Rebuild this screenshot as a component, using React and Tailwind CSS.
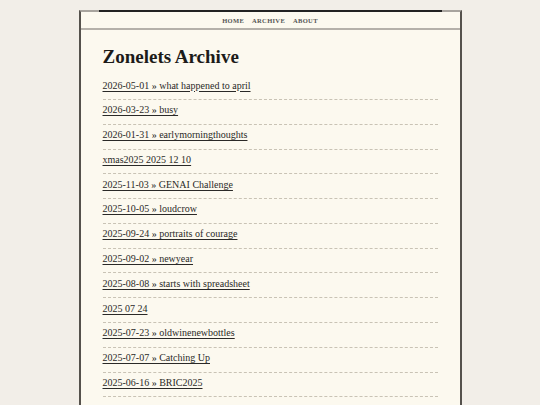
const posts = [
  { date: '2026-05-01', title: 'what happened to april' },
  { date: '2026-03-23', title: 'busy' },
  { date: '2026-01-31', title: 'earlymorningthoughts' },
  { raw: 'xmas2025 2025 12 10' },
  { date: '2025-11-03', title: 'GENAI Challenge' },
  { date: '2025-10-05', title: 'loudcrow' },
  { date: '2025-09-24', title: 'portraits of courage' },
  { date: '2025-09-02', title: 'newyear' },
  { date: '2025-08-08', title: 'starts with spreadsheet' },
  { raw: '2025 07 24' },
  { date: '2025-07-23', title: 'oldwinenewbottles' },
  { date: '2025-07-07', title: 'Catching Up' },
  { date: '2025-06-16', title: 'BRIC2025' },
];

export default function App() {
  return (
    <div
      className="min-h-screen bg-[#f2eee8] pt-[10px]"
      style={{ fontFamily: '"Liberation Serif", "DejaVu Serif", serif' }}
    >
      <div className="mx-auto w-[383px] border-2 border-b-0 border-[#55514c] border-t-[#a8a49e] bg-[#fcf9ef]">
        {/* nav */}
        <div className="mx-[18px] -mt-[2px] border-t-2 border-[#222]">
          <div className="flex justify-center gap-[8px] pt-[4px] pb-[2.5px] text-[6.5px] leading-[9px] font-bold tracking-[0.05em] text-[#555]">
            <span>HOME</span>
            <span>ARCHIVE</span>
            <span>ABOUT</span>
          </div>
        </div>
        <div className="h-[2px] bg-[#b5b1aa]" />

        <main className="px-[22px] pt-[15px] pb-[30px]">
          <h1 className="text-[19px] font-bold text-[#1c1b19] leading-[24px] mb-[6.7px]">Zonelets Archive</h1>
          <ul>
            {posts.map((p, i) => (
              <li
                key={i}
                className="border-b border-dashed border-[#c9c3b5] pt-[3.4px] pb-[7.4px] text-[10px] leading-[13px]"
              >
                <a href="#" className="underline text-[#2a2927] underline-offset-[1.5px]">
                  {p.raw ? p.raw : `${p.date} » ${p.title}`}
                </a>
              </li>
            ))}
          </ul>
        </main>
      </div>
    </div>
  );
}
